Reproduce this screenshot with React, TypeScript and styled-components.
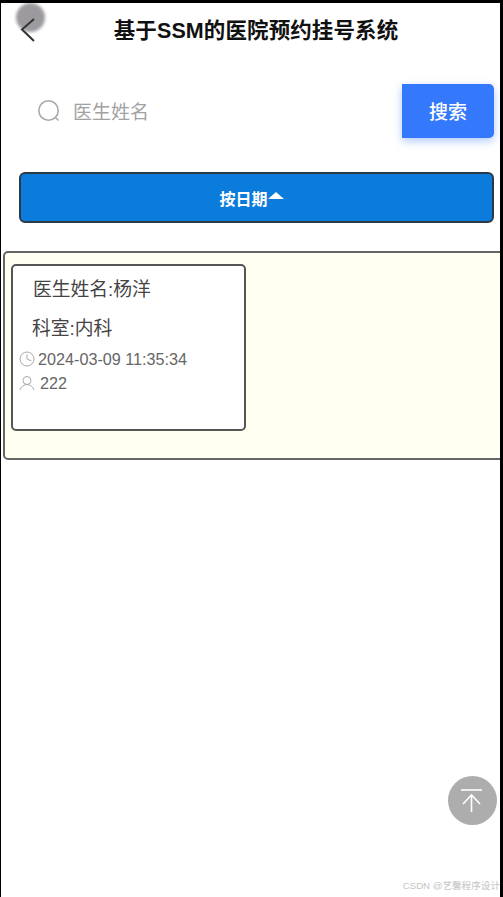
import React from 'react';
import styled, { createGlobalStyle } from 'styled-components';

const cjk = `"Liberation Sans", "Noto Sans CJK SC", sans-serif`;

const GlobalStyle = createGlobalStyle`
  html, body {
    margin: 0;
    height: 100%;
    overflow: hidden;
    background: #000;
  }
  #root {
    height: 100%;
  }
  * {
    box-sizing: border-box;
  }
`;

const Page = styled.div`
  position: relative;
  height: 897px;
  margin: 3px 3px 0 1px;
  background: #fff;
  font-family: ${cjk};
  overflow: hidden;
`;

const Header = styled.header`
  display: flex;
  justify-content: center;
  align-items: center;
  height: 50px;
  padding-left: 11px;
`;

const BackButton = styled.div`
  position: absolute;
  left: 19px;
  top: 15px;
  width: 18px;
  height: 26px;
  display: flex;
`;

const TouchMark = styled.div`
  position: absolute;
  left: 15px;
  top: 0;
  width: 29px;
  height: 29px;
  border-radius: 50%;
  background: #9c9a9f;
  filter: blur(1.5px);
`;

const Title = styled.h1`
  margin: 0;
  font-size: 21.5px;
  font-weight: 700;
  letter-spacing: 0.1px;
  color: #111;
`;

const SearchRow = styled.div`
  display: flex;
  align-items: center;
  height: 54px;
  margin: 31px 6px 0 0;
  padding-left: 36px;
`;

const SearchIcon = styled.svg`
  width: 24px;
  height: 24px;
  flex: none;
  color: #aaa;
`;

const Placeholder = styled.div`
  flex: 1;
  margin-left: 12px;
  padding-bottom: 2px;
  font-size: 19px;
  color: #a2a2a2;
`;

const SearchButton = styled.div`
  display: flex;
  justify-content: center;
  align-items: center;
  width: 92px;
  height: 54px;
  padding-bottom: 2px;
  border-radius: 0 5px 5px 0;
  background: #3478fb;
  box-shadow: 0 3px 8px rgba(52, 120, 251, 0.4);
  color: #fff;
  font-size: 19px;
  font-weight: 500;
`;

const DateBar = styled.div`
  display: flex;
  justify-content: center;
  align-items: center;
  height: 51px;
  margin: 34px 6px 0 18px;
  padding-right: 10px;
  border: 2px solid #2c3a48;
  border-radius: 6px;
  background: #0c7cdc;
  color: #fff;
  font-size: 16px;
  font-weight: 700;
`;

const Caret = styled.span`
  width: 0;
  height: 0;
  margin-bottom: 5px;
  border-left: 8px solid transparent;
  border-right: 8px solid transparent;
  border-bottom: 7px solid #fff;
`;

const Panel = styled.section`
  height: 209px;
  margin: 28px -6px 0 2px;
  padding: 11px 6px;
  border: 2px solid #666;
  border-radius: 5px;
  background: #fffff2;
`;

const Card = styled.article`
  width: 235px;
  height: 167px;
  padding: 12px 6px 0;
  border: 2px solid #555;
  border-radius: 5px;
  background: #fff;
`;

const CardLine = styled.div<{ $indent: number; $gap: number }>`
  height: 24px;
  margin-bottom: ${p => p.$gap}px;
  padding-left: ${p => p.$indent}px;
  font-size: 18.8px;
  line-height: 24px;
  white-space: nowrap;
  color: #444;
`;

const MetaRow = styled.div<{ $gap: number }>`
  display: flex;
  align-items: center;
  gap: ${p => p.$gap}px;
  height: 24px;
  font-size: 16.2px;
  white-space: nowrap;
  color: #666;

  svg {
    flex: none;
    width: 16px;
    height: 16px;
    color: #aaa;
  }
`;

const TopButton = styled.div`
  position: absolute;
  right: 3px;
  top: 773px;
  width: 49px;
  height: 49px;
  border-radius: 50%;
  background: #adadad;
`;

const Watermark = styled.div`
  position: absolute;
  right: 0;
  bottom: 8px;
  font-size: 9.6px;
  white-space: nowrap;
  color: #c4c4c4;
`;

const App: React.FC = () => {
  return (
    <>
      <GlobalStyle />
      <Page>
        <TouchMark />
        <BackButton>
          <svg viewBox="0 0 18 26" width="18" height="26" fill="none">
            <path d="M14 1 L2 11.5 L14 23" stroke="#333" strokeWidth="2" />
          </svg>
        </BackButton>
        <Header>
          <Title>基于SSM的医院预约挂号系统</Title>
        </Header>
        <SearchRow>
          <SearchIcon viewBox="0 0 24 24" fill="none" stroke="currentColor" strokeWidth="1.6">
            <circle cx="11.5" cy="11.5" r="9.7" />
            <path d="M18.5 18.5 L21.5 21.5" />
          </SearchIcon>
          <Placeholder>医生姓名</Placeholder>
          <SearchButton>搜索</SearchButton>
        </SearchRow>
        <DateBar>
          按日期
          <Caret />
        </DateBar>
        <Panel>
          <Card>
            <CardLine $indent={14} $gap={15}>医生姓名:杨洋</CardLine>
            <CardLine $indent={13} $gap={6}>科室:内科</CardLine>
            <MetaRow $gap={3}>
              <svg viewBox="0 0 16 16" fill="none" stroke="currentColor" strokeWidth="1">
                <circle cx="8" cy="8" r="7" />
                <path d="M8 3.5 V8 L12.5 10" />
              </svg>
              2024-03-09 11:35:34
            </MetaRow>
            <MetaRow $gap={5}>
              <svg viewBox="0 0 16 16" fill="none" stroke="currentColor" strokeWidth="1">
                <circle cx="8" cy="5.5" r="4" />
                <path d="M1 15 C2 11.5 5 9.5 8 9.5 C11 9.5 14 11.5 15 15" />
              </svg>
              222
            </MetaRow>
          </Card>
        </Panel>
        <TopButton>
          <svg viewBox="0 0 49 49" width="49" height="49" fill="none" stroke="#fff" strokeWidth="1.6">
            <path d="M13 14 H34" />
            <path d="M23.5 19 V36" />
            <path d="M15 28 L23.5 19 L32 28" />
          </svg>
        </TopButton>
        <Watermark>CSDN @艺馨程序设计</Watermark>
      </Page>
    </>
  );
};

export default App;
